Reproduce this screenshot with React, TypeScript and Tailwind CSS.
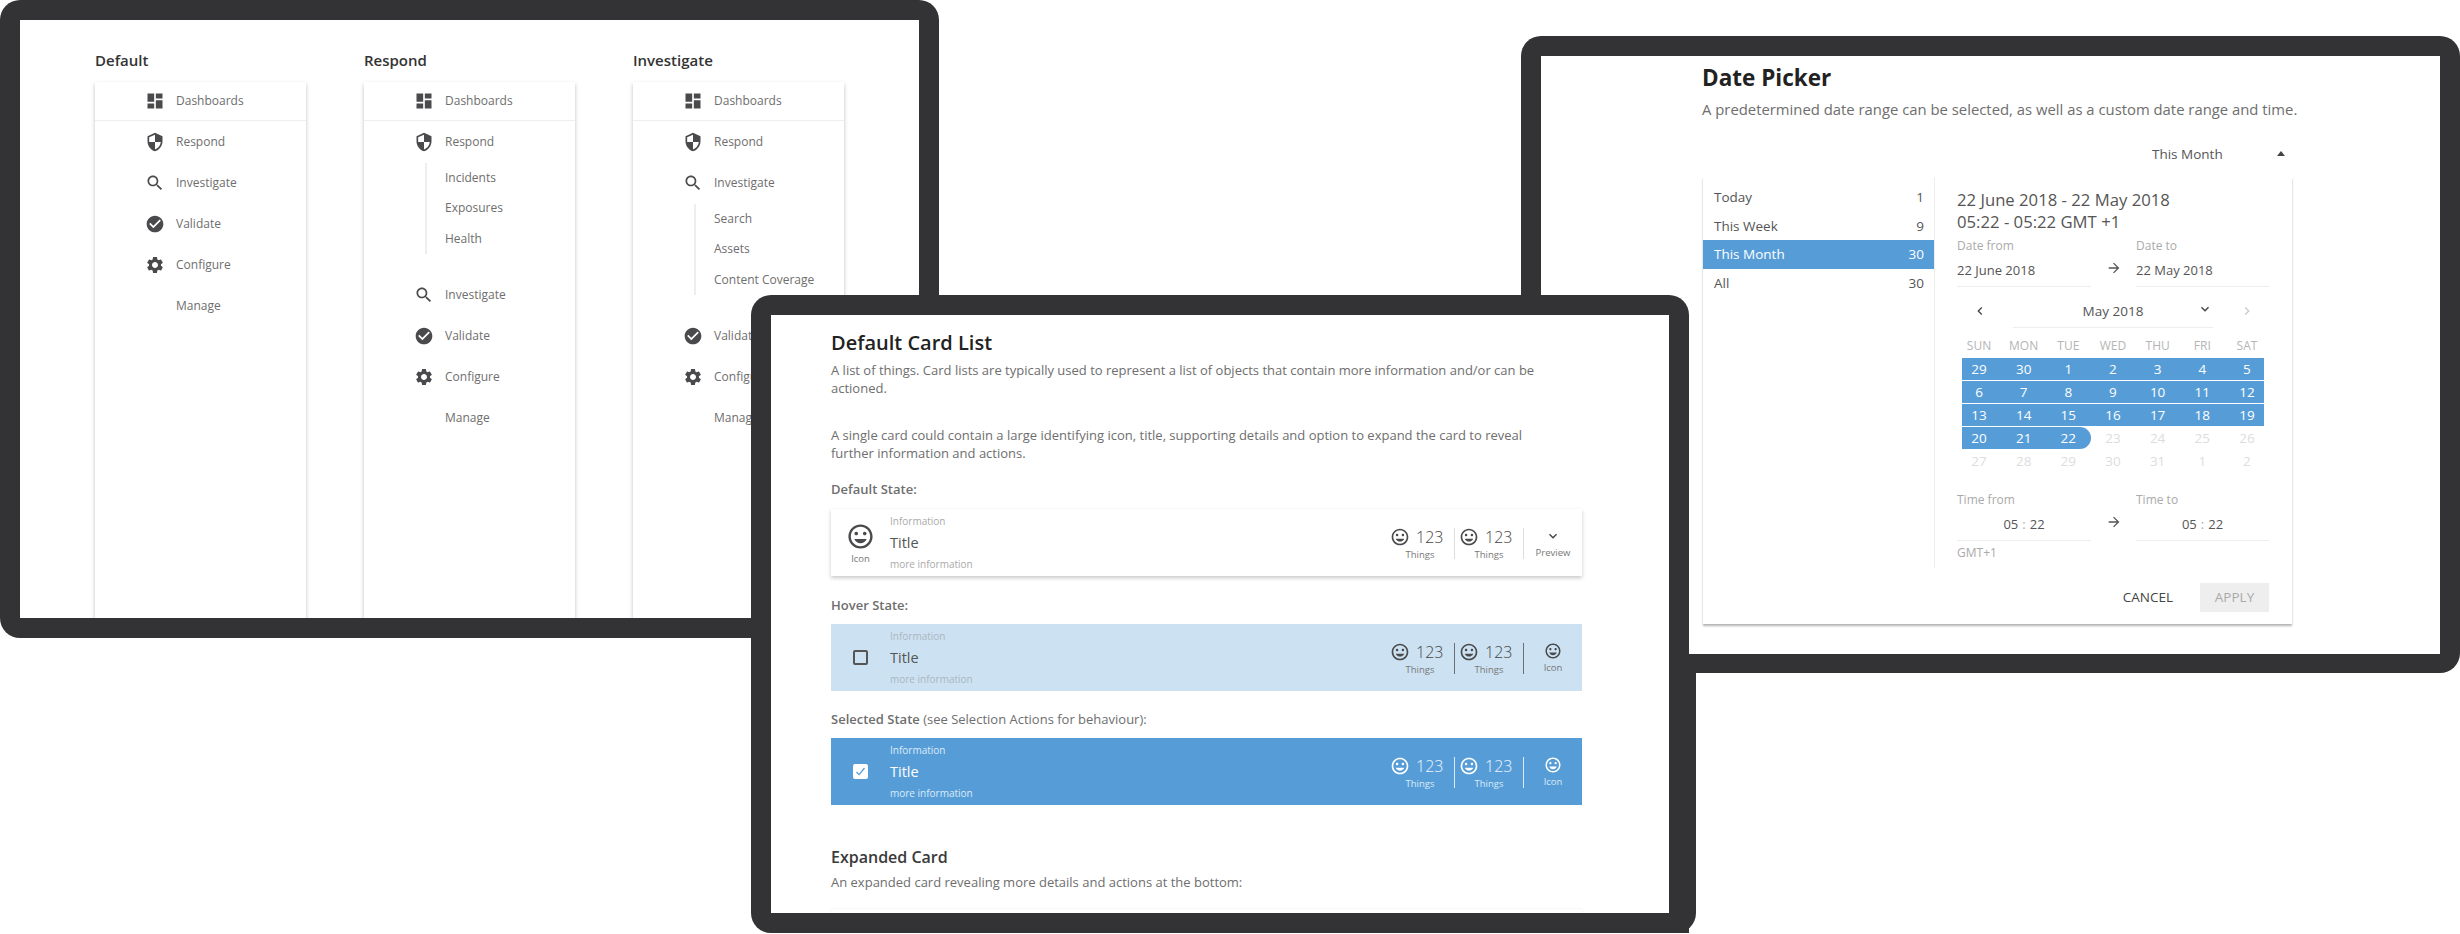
import React from 'react';

const P = {
  dashboard: 'M3 13h8V3H3v10zm0 8h8v-6H3v6zm10 0h8V11h-8v10zm0-18v6h8V3h-8z',
  shield: 'M12 1L3 5v6c0 5.55 3.84 10.74 9 12 5.16-1.26 9-6.45 9-12V5l-9-4zm0 10.99h7c-.53 4.12-3.28 7.79-7 8.94V12H5V6.3l7-3.11v8.8z',
  search: 'M15.5 14h-.79l-.28-.27C15.41 12.59 16 11.11 16 9.5 16 5.91 13.09 3 9.5 3S3 5.91 3 9.5 5.91 16 9.5 16c1.61 0 3.09-.59 4.23-1.57l.27.28v.79l5 4.99L20.49 19l-4.99-5zm-6 0C7.01 14 5 11.99 5 9.5S7.01 5 9.5 5 14 7.01 14 9.5 11.99 14 9.5 14z',
  check: 'M12 2C6.48 2 2 6.48 2 12s4.48 10 10 10 10-4.48 10-10S17.52 2 12 2zm-2 15l-5-5 1.41-1.41L10 14.17l7.59-7.59L19 8l-9 9z',
  gear: 'M19.14 12.94c.04-.3.06-.61.06-.94 0-.32-.02-.64-.07-.94l2.03-1.58c.18-.14.23-.41.12-.61l-1.92-3.32c-.12-.22-.37-.29-.59-.22l-2.39.96c-.5-.38-1.03-.7-1.62-.94l-.36-2.54c-.04-.24-.24-.41-.48-.41h-3.84c-.24 0-.43.17-.47.41l-.36 2.54c-.59.24-1.13.57-1.62.94l-2.39-.96c-.22-.08-.47 0-.59.22L2.74 8.87c-.12.21-.08.47.12.61l2.03 1.58c-.05.3-.09.63-.09.94s.02.64.07.94l-2.03 1.58c-.18.14-.23.41-.12.61l1.92 3.32c.12.22.37.29.59.22l2.39-.96c.5.38 1.03.7 1.62.94l.36 2.54c.05.24.24.41.48.41h3.84c.24 0 .44-.17.47-.41l.36-2.54c.59-.24 1.13-.56 1.62-.94l2.39.96c.22.08.47 0 .59-.22l1.92-3.32c.12-.22.07-.47-.12-.61l-2.01-1.58zM12 15.6c-1.98 0-3.6-1.62-3.6-3.6s1.62-3.6 3.6-3.6 3.6 1.62 3.6 3.6-1.62 3.6-3.6 3.6z',
  mood: 'M11.99 2C6.47 2 2 6.48 2 12s4.47 10 9.99 10C17.52 22 22 17.52 22 12S17.52 2 11.99 2zM12 20c-4.42 0-8-3.58-8-8s3.58-8 8-8 8 3.58 8 8-3.58 8-8 8zm3.5-9c.83 0 1.5-.67 1.5-1.5S16.33 8 15.5 8 14 8.67 14 9.5s.67 1.5 1.5 1.5zm-7 0c.83 0 1.5-.67 1.5-1.5S9.33 8 8.5 8 7 8.67 7 9.5 7.67 11 8.5 11zm3.5 6.5c2.33 0 4.31-1.46 5.11-3.5H6.89c.8 2.04 2.78 3.5 5.11 3.5z',
  down: 'M16.59 8.59L12 13.17 7.41 8.59 6 10l6 6 6-6z',
  left: 'M15.41 7.41L14 6l-6 6 6 6 1.41-1.41L10.83 12z',
  right: 'M10 6L8.59 7.41 13.17 12l-4.58 4.59L10 18l6-6z',
  arrow: 'M12 4l-1.41 1.41L16.17 11H4v2h12.17l-5.58 5.59L12 20l8-8z',
};

function Icon({ d, className }: { d: string; className: string }) {
  return (
    <svg viewBox="0 0 24 24" className={className} fill="currentColor">
      <path d={d} />
    </svg>
  );
}

function NavRow({ icon, label }: { icon?: string; label: string }) {
  return (
    <div className="h-[41px] flex items-center pl-[50px] gap-[11px] text-[12px] text-[#6e6e6e]">
      {icon ? <Icon d={icon} className="w-5 h-5 text-[#4a4a4c]" /> : <span className="w-5" />}
      <span>{label}</span>
    </div>
  );
}

function SubNav({ items }: { items: string[] }) {
  return (
    <div className="ml-[61px] mt-[0.5px] mb-[20.5px] border-l-2 border-[#eeeeee] pl-[18px] w-max">
      {items.map((item) => (
        <div key={item} className="h-[30.5px] flex items-center text-[12px] text-[#6e6e6e] whitespace-nowrap">
          {item}
        </div>
      ))}
    </div>
  );
}

function NavColumn({ title, open }: { title: string; open?: string }) {
  return (
    <div className="w-[211px]">
      <div className="h-[24px] leading-[24px] text-[15px] font-semibold text-[#333] mb-[10px]">{title}</div>
      <div className="h-[560px] bg-white shadow-[0_2px_4px_rgba(0,0,0,0.25)]">
        <div className="h-[39px] border-b border-[#eeeeee] flex items-center pl-[50px] gap-[11px] text-[12px] text-[#6e6e6e]">
          <Icon d={P.dashboard} className="w-5 h-5 text-[#4a4a4c]" />
          <span>Dashboards</span>
        </div>
        <NavRow icon={P.shield} label="Respond" />
        {open === 'respond' && <SubNav items={['Incidents', 'Exposures', 'Health']} />}
        <NavRow icon={P.search} label="Investigate" />
        {open === 'investigate' && <SubNav items={['Search', 'Assets', 'Content Coverage']} />}
        <NavRow icon={P.check} label="Validate" />
        <NavRow icon={P.gear} label="Configure" />
        <NavRow label="Manage" />
      </div>
    </div>
  );
}

const TONES = {
  base: { box: 'bg-white shadow-[0_2px_4px_rgba(0,0,0,0.22)]', top: 'text-[#aaaaaa]', title: 'text-[#555555]', icon: 'text-[#4a4a4c]', num: 'text-[#444444]', small: 'text-[#777777]', line: 'border-[#dddddd]' },
  hover: { box: 'bg-[#cce2f2]', top: 'text-[#aab6bf]', title: 'text-[#555555]', icon: 'text-[#4a4a4c]', num: 'text-[#444444]', small: 'text-[#777777]', line: 'border-[#6a6f73]' },
  selected: { box: 'bg-[#569dd8]', top: 'text-[#dcebf7]', title: 'text-white', icon: 'text-white', num: 'text-[#f0f6fb]', small: 'text-[#dcebf7]', line: 'border-[#dcebf7]' },
};

function Stat({ tone }: { tone: keyof typeof TONES }) {
  const t = TONES[tone];
  return (
    <div className={`w-[69px] h-[31px] border-r ${t.line}`}>
      <div className="h-[18px] flex items-center pl-[4px] gap-[6px]">
        <Icon d={P.mood} className={`w-5 h-5 ${t.icon}`} />
        <span className={`text-[16px] font-light ${t.num}`}>123</span>
      </div>
      <div className={`mt-[2px] leading-[13px] text-[9.5px] text-center ${t.small}`}>Things</div>
    </div>
  );
}

function Card({ tone }: { tone: keyof typeof TONES }) {
  const t = TONES[tone];
  return (
    <div className={`h-[67px] w-[751px] flex ${t.box}`}>
      <div className="w-[59px] flex flex-col items-center">
        {tone === 'base' && (
          <>
            <Icon d={P.mood} className={`w-[29px] h-[29px] mt-[13px] ${t.icon}`} />
            <span className={`mt-[1px] text-[9.5px] leading-[14px] ${t.small}`}>Icon</span>
          </>
        )}
        {tone === 'hover' && <span className="mt-[26px] w-[15px] h-[15px] rounded-[2px] border-2 border-[#555555]" />}
        {tone === 'selected' && (
          <span className="mt-[26px] w-[15px] h-[15px] rounded-[2px] bg-white flex items-center justify-center">
            <svg viewBox="0 0 15 15" className="w-[15px] h-[15px]" fill="none" stroke="#569dd8" strokeWidth="1.3">
              <path d="M3.5 8l2.6 2.6L11.5 4" />
            </svg>
          </span>
        )}
      </div>
      <div className="flex-1 pt-[4px]">
        <div className={`h-[16px] leading-[16px] text-[10px] ${t.top}`}>Information</div>
        <div className={`h-[28px] leading-[28px] text-[14.5px] ${t.title}`}>Title</div>
        <div className={`h-[14px] leading-[14px] text-[10px] ${t.top}`}>more information</div>
      </div>
      <div className="flex mt-[19px]">
        <Stat tone={tone} />
        <Stat tone={tone} />
        <div className="w-[58px] h-[31px] flex flex-col items-center">
          {tone === 'base' ? (
            <Icon d={P.down} className="w-[18px] h-[18px] text-[#444444]" />
          ) : (
            <Icon d={P.mood} className={`w-5 h-5 -mt-[1px] ${t.icon}`} />
          )}
          <span className={`text-[9.5px] leading-[13px] mt-[1px] ${t.small} ${tone === 'base' ? 'mt-[2px]' : ''}`}>
            {tone === 'base' ? 'Preview' : 'Icon'}
          </span>
        </div>
      </div>
    </div>
  );
}

function Label({ children }: { children: React.ReactNode }) {
  return <div className="leading-[18px] text-[13px] text-[#6e6e6e]">{children}</div>;
}

function Field({ label, value, center, w }: { label: string; value: React.ReactNode; center?: boolean; w: string }) {
  return (
    <div className={w}>
      <div className="h-[16px] leading-[16px] text-[12px] text-[#aaaaaa]">{label}</div>
      <div className={`h-[33px] leading-[32px] text-[13px] text-[#555555] border-b border-[#eeeeee] ${center ? 'text-center' : ''}`}>
        {value}
      </div>
    </div>
  );
}

function TimeValue() {
  return (
    <>
      05<span className="mx-[4px] text-[#aaaaaa]">:</span>22
    </>
  );
}

const WEEKS = [
  ['29', '30', '1', '2', '3', '4', '5'],
  ['6', '7', '8', '9', '10', '11', '12'],
  ['13', '14', '15', '16', '17', '18', '19'],
];

function Cells({ days }: { days: string[] }) {
  return (
    <>
      {days.map((d, i) => (
        <span key={i} className="w-[34px] mr-[10.67px] last:mr-0 text-center">
          {d}
        </span>
      ))}
    </>
  );
}

function Calendar() {
  return (
    <div className="ml-[5px] w-[302px] text-[13.5px]">
      <div className="flex mt-[9px] h-[18px] leading-[18px] text-[12px] text-[#b5b5b5]">
        <Cells days={['SUN', 'MON', 'TUE', 'WED', 'THU', 'FRI', 'SAT']} />
      </div>
      <div className="mt-[2.7px] flex flex-col gap-[1px]">
        {WEEKS.map((w) => (
          <div key={w[0]} className="flex h-[22.2px] leading-[22px] bg-[#569dd8] text-white">
            <Cells days={w} />
          </div>
        ))}
        <div className="flex h-[22.2px] leading-[22px] relative text-[#dddddd]">
          <span className="absolute left-0 top-0 h-full w-[128.7px] bg-[#569dd8] rounded-r-full" />
          {['20', '21', '22'].map((d) => (
            <span key={d} className="relative w-[34px] mr-[10.67px] text-center text-white">{d}</span>
          ))}
          <Cells days={['23', '24', '25', '26']} />
        </div>
        <div className="flex h-[22.2px] leading-[22px] text-[#dddddd]">
          <Cells days={['27', '28', '29', '30', '31', '1', '2']} />
        </div>
      </div>
    </div>
  );
}

export default function App() {
  return (
    <div className="relative w-[2460px] h-[934px] overflow-hidden bg-white font-['Open_Sans',sans-serif]">
      {/* left window */}
      <div className="absolute left-0 top-0 w-[939px] h-[638px] rounded-[20px] bg-[#333335] p-[20px]">
        <div className="w-[899px] h-[598px] bg-white overflow-hidden pt-[28px] pl-[75px] flex gap-[58px]">
          <NavColumn title="Default" />
          <NavColumn title="Respond" open="respond" />
          <NavColumn title="Investigate" open="investigate" />
        </div>
      </div>

      {/* date picker window */}
      <div className="absolute left-[1521px] top-[36px] w-[939px] h-[637px] rounded-[20px] bg-[#333335] p-[20px]">
        <div className="w-[899px] h-[598px] bg-white pl-[162px] pt-[8px]">
          <h2 className="-ml-[1px] h-[28px] leading-[28px] text-[22.5px] font-bold text-[#222]">Date Picker</h2>
          <p className="-ml-[1px] mt-[7px] leading-[20px] text-[14.85px] text-[#6e6e6e] whitespace-nowrap">
            A predetermined date range can be selected, as well as a custom date range and time.
          </p>
          <div className="mt-[25px] h-[20px] w-[589px] relative text-[13.5px] leading-[20px] text-[#555555]">
            <span className="ml-[449px]">This Month</span>
            <span className="absolute left-[574px] top-[7px] w-0 h-0 border-x-[4px] border-x-transparent border-b-[5px] border-b-[#444444]" />
          </div>
          <div className="mt-[12.6px] w-[589px] h-[447px] bg-white shadow-[0_2px_2px_rgba(0,0,0,0.3)]">
            <div className="flex h-[391px]">
              <div className="w-[232px] h-full border-r border-[#eeeeee] pt-[6px] flex flex-col text-[13.5px]">
                {[
                  ['Today', '1'],
                  ['This Week', '9'],
                  ['This Month', '30'],
                  ['All', '30'],
                ].map(([name, n]) => (
                  <div
                    key={name}
                    className={`h-[28.8px] flex items-center justify-between pl-[11px] pr-[10px] ${
                      name === 'This Month' ? 'bg-[#569dd8] text-white' : 'text-[#555555]'
                    }`}
                  >
                    <span>{name}</span>
                    <span>{n}</span>
                  </div>
                ))}
              </div>
              <div className="pl-[22px] pt-[12.4px] w-[356px]">
                <div className="leading-[22px] text-[16.7px] text-[#555555]">
                  22 June 2018 - 22 May 2018
                  <br />
                  05:22 - 05:22 GMT +1
                </div>
                <div className="mt-[5px] flex">
                  <Field label="Date from" value="22 June 2018" w="w-[134px]" />
                  <div className="w-[45px] pt-[22px] flex justify-center">
                    <Icon d={P.arrow} className="w-[16px] h-[16px] text-[#555555]" />
                  </div>
                  <Field label="Date to" value="22 May 2018" w="w-[133px]" />
                </div>
                <div className="mt-[8px] h-[33px] flex text-[13.5px]">
                  <div className="w-[45px] flex justify-center items-center">
                    <Icon d={P.left} className="w-[16px] h-[16px] text-[#444444]" />
                  </div>
                  <div className="ml-[11px] w-[200px] relative text-center leading-[32px] text-[#555555] border-b border-[#eeeeee]">
                    May 2018
                    <Icon d={P.down} className="absolute right-[0px] top-[6px] w-[16px] h-[16px] text-[#444444]" />
                  </div>
                  <div className="w-[68px] flex justify-center items-center">
                    <Icon d={P.right} className="w-[16px] h-[16px] text-[#cccccc]" />
                  </div>
                </div>
                <Calendar />
                <div className="mt-[19px] flex">
                  <Field label="Time from" value={<TimeValue />} center w="w-[134px]" />
                  <div className="w-[45px] pt-[22px] flex justify-center">
                    <Icon d={P.arrow} className="w-[16px] h-[16px] text-[#555555]" />
                  </div>
                  <Field label="Time to" value={<TimeValue />} center w="w-[133px]" />
                </div>
                <div className="mt-[4px] h-[16px] leading-[16px] text-[12px] text-[#aaaaaa]">GMT+1</div>
              </div>
            </div>
            <div className="flex justify-end items-center gap-[27px] pr-[23px] pt-[15px] text-[13.5px]">
              <span className="text-[#444444]">CANCEL</span>
              <span className="w-[69px] h-[29px] leading-[29px] text-center bg-[#eeeeee] text-[#aaaaaa]">APPLY</span>
            </div>
          </div>
        </div>
      </div>

      {/* card list window */}
      <div className="absolute left-[751px] top-[295px] w-[938px] h-[638px] rounded-[20px] rounded-br-none bg-[#333335] p-[20px]">
        <span className="absolute right-[-7px] top-[359px] bottom-0 w-[60px] rounded-br-[20px] bg-[#333335]" />
        <div className="relative w-[898px] h-[598px] bg-white overflow-hidden pl-[60px] pt-[14px]">
          <h2 className="h-[28px] leading-[28px] text-[20px] font-semibold text-[#222]">Default Card List</h2>
          <p className="mt-[3.5px] leading-[18px] text-[13px] text-[#6e6e6e] whitespace-nowrap">
            A list of things. Card lists are typically used to represent a list of objects that contain more information and/or can be
            <br />
            actioned.
          </p>
          <p className="mt-[29px] leading-[18px] text-[13px] text-[#6e6e6e] whitespace-nowrap">
            A single card could contain a large identifying icon, title, supporting details and option to expand the card to reveal
            <br />
            further information and actions.
          </p>
          <div className="mt-[18.5px] mb-[10.5px]"><Label><b className="font-semibold">Default State:</b></Label></div>
          <Card tone="base" />
          <div className="mt-[20px] mb-[10px]"><Label><b className="font-semibold">Hover State:</b></Label></div>
          <Card tone="hover" />
          <div className="mt-[19.5px] mb-[9.5px]"><Label><b className="font-semibold">Selected State</b> (see Selection Actions for behaviour):</Label></div>
          <Card tone="selected" />
          <h3 className="mt-[40px] h-[24px] leading-[24px] text-[16px] font-semibold text-[#3a3a3a]">Expanded Card</h3>
          <p className="mt-[4px] leading-[18px] text-[13px] text-[#6e6e6e]">An expanded card revealing more details and actions at the bottom:</p>
          <div className="mt-[18px] w-[751px] h-[40px] shadow-[0_0_2px_rgba(0,0,0,0.1)]" />
        </div>
      </div>
    </div>
  );
}
